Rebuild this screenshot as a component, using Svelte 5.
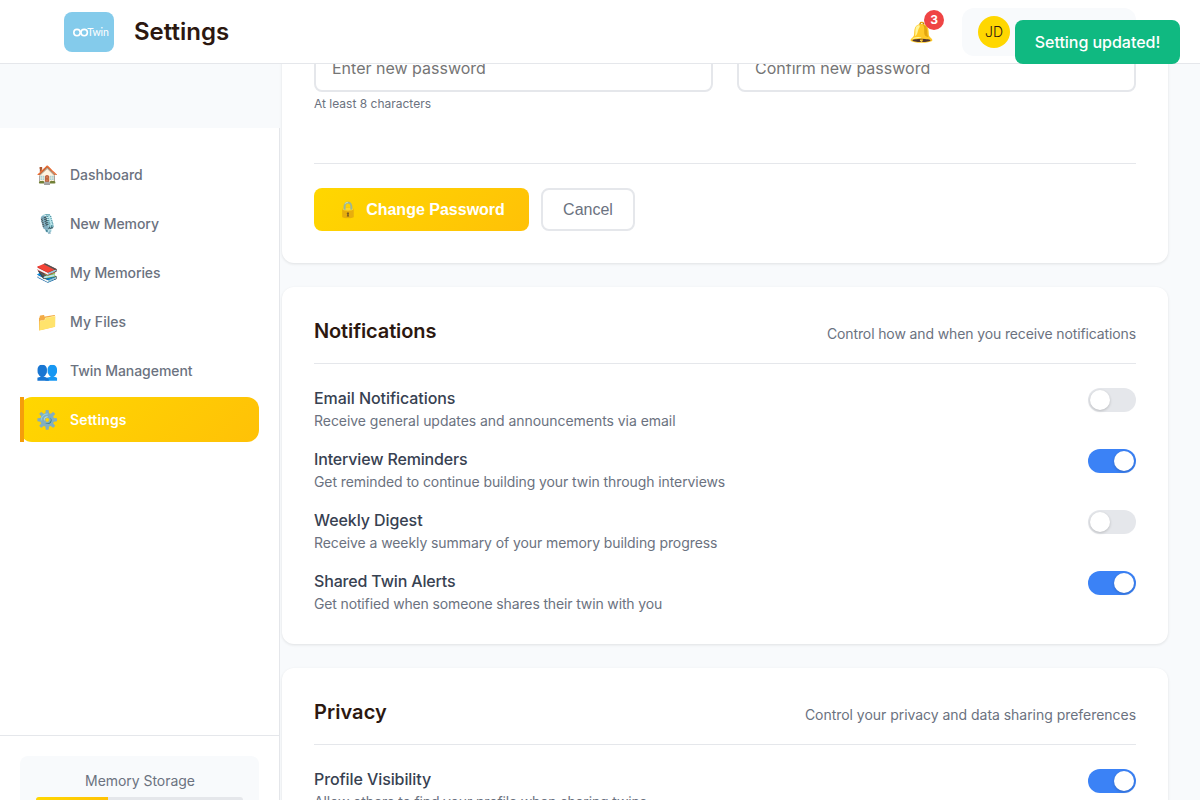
<script>
  const nav = [
    { icon: '🏠', label: 'Dashboard', tracking: -0.03 },
    { icon: '🎙️', label: 'New Memory', tracking: -0.06 },
    { icon: '📚', label: 'My Memories', tracking: -0.09 },
    { icon: '📁', label: 'My Files', tracking: 0.06 },
    { icon: '👥', label: 'Twin Management', tracking: -0.06 },
    { icon: '⚙️', label: 'Settings', tracking: 0.14, active: true }
  ];

  let sections = $state([
    {
      title: 'Notifications',
      titleTracking: -0.12,
      text: 'Control how and when you receive notifications',
      textTracking: -0.123,
      items: [
        { title: 'Email Notifications', titleTracking: -0.06, text: 'Receive general updates and announcements via email', textTracking: -0.045, on: false },
        { title: 'Interview Reminders', titleTracking: -0.16, text: 'Get reminded to continue building your twin through interviews', textTracking: -0.085, on: true },
        { title: 'Weekly Digest', titleTracking: -0.08, text: 'Receive a weekly summary of your memory building progress', textTracking: -0.085, on: false },
        { title: 'Shared Twin Alerts', titleTracking: -0.16, text: 'Get notified when someone shares their twin with you', textTracking: -0.143, on: true }
      ]
    },
    {
      title: 'Privacy',
      titleTracking: 0.07,
      text: 'Control your privacy and data sharing preferences',
      textTracking: -0.035,
      items: [
        { title: 'Profile Visibility', titleTracking: -0.09, text: 'Allow others to find your profile when sharing twins', textTracking: -0.143, on: true }
      ]
    }
  ]);

  const storageUsed = 35;
</script>

<div class="app">
  <header class="topbar">
    <div class="brand">
      <svg class="logo" viewBox="0 0 50 40" width="50" height="40">
        <rect width="50" height="40" rx="8" fill="#84cbeb" />
        <g fill="none" stroke="#fff" stroke-width="1.6">
          <circle cx="13" cy="20.6" r="3.2" />
          <circle cx="20.2" cy="20.6" r="3.2" />
        </g>
        <text x="23.2" y="23.8" textLength="21.6" fill="#fff">Twin</text>
      </svg>
      <h1>Settings</h1>
    </div>
    <div class="account">
      <div class="bell">🔔<span class="badge">3</span></div>
      <div class="profile"><span class="avatar">JD</span></div>
    </div>
  </header>

  <div class="body">
    <aside>
      <nav>
        {#each nav as item}
          <div class="nav-item" class:active={item.active}>
            <span class="nav-icon">{item.icon}</span>
            <span style="letter-spacing: {item.tracking}px">{item.label}</span>
          </div>
        {/each}
      </nav>
      <div class="side-footer">
        <div class="storage">
          <div class="storage-label">Memory Storage</div>
          <div class="bar"><div class="fill" style="width: {storageUsed}%"></div></div>
        </div>
      </div>
    </aside>

    <main>
      <section class="card password">
        <div class="fields">
          <div>
            <input type="password" placeholder="Enter new password" />
            <div class="hint">At least 8 characters</div>
          </div>
          <div>
            <input type="password" placeholder="Confirm new password" />
          </div>
        </div>
        <div class="actions">
          <button class="primary"><span class="lock">🔒</span>Change Password</button>
          <button class="secondary">Cancel</button>
        </div>
      </section>

      {#each sections as section}
        <section class="card">
          <div class="card-head">
            <h2 style="letter-spacing: {section.titleTracking}px">{section.title}</h2>
            <p style="letter-spacing: {section.textTracking}px">{section.text}</p>
          </div>
          <div class="rows">
            {#each section.items as item}
              <div class="row">
                <div>
                  <div class="row-title" style="letter-spacing: {item.titleTracking}px">{item.title}</div>
                  <div class="row-text" style="letter-spacing: {item.textTracking}px">{item.text}</div>
                </div>
                <button
                  class="toggle"
                  class:on={item.on}
                  role="switch"
                  aria-checked={item.on}
                  aria-label={item.title}
                  onclick={() => (item.on = !item.on)}
                ><span class="knob"></span></button>
              </div>
            {/each}
          </div>
        </section>
      {/each}
    </main>
  </div>

  <div class="toast">Setting updated!</div>
</div>

<style>
  :global(body) {
    margin: 0;
    overflow: hidden;
  }
  * {
    box-sizing: border-box;
  }
  .app {
    position: relative;
    display: flex;
    flex-direction: column;
    height: 800px;
    overflow: hidden;
    background: #f8fafc;
    color: #2c1810;
    font-family: Inter, sans-serif;
    font-size: 16px;
  }
  h1,
  h2,
  p {
    margin: 0;
  }
  .topbar {
    flex: none;
    display: flex;
    align-items: center;
    justify-content: space-between;
    height: 64px;
    padding: 0 64px;
    background: #fff;
    border-bottom: 1px solid #e5e7eb;
  }
  .brand {
    display: flex;
    align-items: center;
    gap: 20px;
  }
  .logo {
    display: block;
  }
  .logo text {
    font: 400 10.5px Lato, sans-serif;
  }
  h1 {
    font-size: 24px;
    font-weight: 600;
    line-height: 29px;
  }
  .account {
    display: flex;
    align-items: center;
    gap: 20px;
  }
  .bell {
    position: relative;
    width: 41px;
    height: 40px;
    padding-top: 8px;
    text-align: center;
    font-size: 20px;
    line-height: 24px;
  }
  .badge {
    position: absolute;
    top: -2px;
    right: -2px;
    width: 20px;
    height: 20px;
    border-radius: 50%;
    background: #ef4444;
    color: #fff;
    font-size: 12px;
    font-weight: 700;
    line-height: 20px;
  }
  .profile {
    display: flex;
    width: 174px;
    height: 48px;
    padding: 8px 16px;
    border-radius: 12px;
    background: #f8fafc;
  }
  .avatar {
    width: 32px;
    height: 32px;
    border-radius: 50%;
    background: #ffd700;
    text-align: center;
    font-size: 14px;
    font-weight: 300;
    line-height: 32px;
  }
  .body {
    flex: 1;
    min-height: 0;
    display: flex;
    overflow: hidden;
  }
  aside {
    flex: none;
    display: flex;
    flex-direction: column;
    width: 280px;
    height: 736px;
    margin-top: 64px;
    background: #fff;
    border-right: 1px solid #e5e7eb;
  }
  nav {
    display: flex;
    flex-direction: column;
    gap: 4px;
    height: 607px;
    padding: 24px 20px;
  }
  .nav-item {
    position: relative;
    display: flex;
    align-items: center;
    gap: 12px;
    height: 45px;
    padding: 0 16px;
    border-radius: 12px;
    color: #6b7280;
    font-size: 14px;
    font-weight: 500;
  }
  .nav-icon {
    width: 22px;
    font-size: 18px;
    line-height: 21px;
  }
  .active {
    background: linear-gradient(135deg, #ffd700, #ffc107);
    color: #fff;
    font-weight: 600;
  }
  .active::before {
    content: '';
    position: absolute;
    left: 0;
    top: 0;
    bottom: 0;
    width: 4px;
    background: #f59e0b;
  }
  .side-footer {
    padding: 20px;
    border-top: 1px solid #e5e7eb;
  }
  .storage {
    padding: 16px;
    border-radius: 8px;
    background: #f8fafc;
  }
  .storage-label {
    margin-bottom: 8px;
    color: #6b7280;
    text-align: center;
    font-size: 14px;
    letter-spacing: -0.04px;
    text-indent: 1px;
    line-height: 17px;
  }
  .bar {
    height: 6px;
    overflow: hidden;
    border-radius: 3px;
    background: #e5e7eb;
  }
  .fill {
    height: 100%;
    background: linear-gradient(135deg, #ffd700, #ffc107);
  }
  main {
    flex: 1;
    display: flex;
    flex-direction: column;
    gap: 24px;
    min-width: 0;
    padding: 0 32px 0 2px;
  }
  .card {
    flex: none;
    padding: 32px;
    border-radius: 12px;
    background: #fff;
    box-shadow: 0 1px 3px rgba(0, 0, 0, 0.1);
  }
  .password {
    margin-top: -51px;
  }
  .fields {
    display: grid;
    grid-template-columns: 1fr 1fr;
    gap: 24px;
    height: 118px;
  }
  input {
    display: block;
    width: 100%;
    height: 47px;
    padding: 11px 16px 13px;
    border: 2px solid #e5e7eb;
    border-radius: 8px;
    background: #fff;
    font: 16px Inter, sans-serif;
  }
  .hint {
    margin-top: 4px;
    color: #6b7280;
    font-size: 12px;
    line-height: 15px;
  }
  .actions {
    display: flex;
    gap: 12px;
    padding-top: 24px;
    border-top: 1px solid #e5e7eb;
  }
  .actions button {
    display: flex;
    align-items: center;
    justify-content: center;
    height: 43px;
    padding: 0;
    border-radius: 8px;
    font: 16px 'Liberation Sans', Arial, sans-serif;
  }
  .actions .primary {
    gap: 8px;
    width: 215px;
    border: 0;
    background: linear-gradient(135deg, #ffd700, #ffc107);
    color: #fff;
    font-weight: 600;
  }
  .lock {
    width: 20px;
    opacity: 0.8;
    font-weight: 400;
  }
  .actions .secondary {
    width: 94px;
    border: 2px solid #e5e7eb;
    background: #fff;
    color: #6b7280;
  }
  .card-head {
    display: flex;
    align-items: flex-end;
    justify-content: space-between;
    padding-bottom: 20px;
    border-bottom: 1px solid #e5e7eb;
  }
  h2 {
    font-size: 20px;
    font-weight: 600;
    line-height: 24px;
  }
  .card-head p {
    padding-bottom: 1px;
    color: #6b7280;
    font-size: 14px;
    line-height: 17px;
  }
  .rows {
    display: flex;
    flex-direction: column;
    gap: 20px;
    padding-top: 24px;
  }
  .row {
    display: flex;
    align-items: flex-start;
    justify-content: space-between;
  }
  .row-title {
    margin-bottom: 4px;
    color: #374151;
    font-weight: 500;
    line-height: 20px;
  }
  .row-text {
    color: #6b7280;
    font-size: 14px;
    line-height: 17px;
  }
  .toggle {
    display: flex;
    width: 48px;
    height: 24px;
    padding: 2px;
    border: 0;
    border-radius: 12px;
    background: #e5e7eb;
  }
  .toggle.on {
    justify-content: flex-end;
    background: #3b82f6;
  }
  .knob {
    width: 20px;
    height: 20px;
    border-radius: 50%;
    background: #fff;
    box-shadow: 0 1px 3px rgba(0, 0, 0, 0.2);
  }
  .toast {
    position: absolute;
    top: 20px;
    right: 20px;
    width: 165px;
    height: 44px;
    border-radius: 8px;
    background: #10b981;
    color: #fff;
    text-align: center;
    font-weight: 500;
    letter-spacing: -0.03px;
    line-height: 44px;
  }
</style>
